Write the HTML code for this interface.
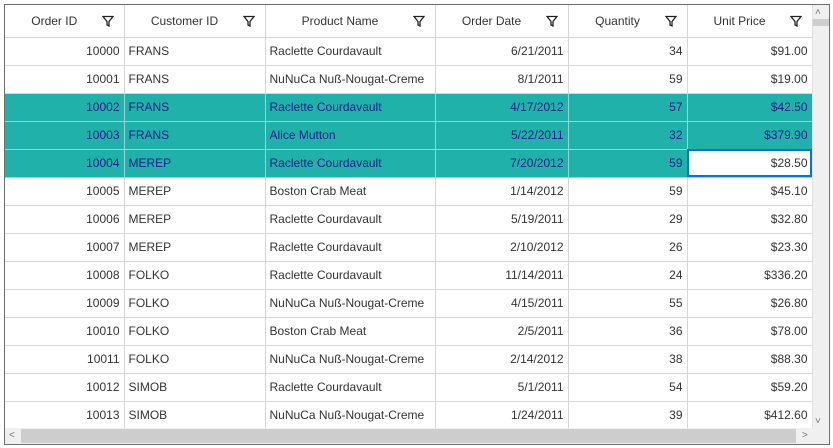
<!DOCTYPE html>
<html><head><style>
*{margin:0;padding:0;box-sizing:border-box}
body{width:833px;height:448px;background:#fff;position:relative;overflow:hidden;font-family:"Liberation Sans",sans-serif;font-size:12px;color:#333}
#frame{position:absolute;left:4px;top:4px;width:826px;height:441px;border:1px solid #6e6e6e;overflow:hidden}
table{border-collapse:collapse;table-layout:fixed;position:absolute;left:0;top:0}
td,th{height:28px;border-right:1px solid #d6d6d6;border-bottom:1px solid #d6d6d6;padding:0 4px;white-space:nowrap;overflow:hidden;font-weight:normal}
th{height:32px;text-align:center;position:relative;padding-right:24px;color:#333}
th svg{position:absolute;right:10px;top:10px}
td.r{text-align:right}
tr.sel td{background:#20b2aa;color:#1a1a8c;border-bottom-color:#8fd8d4;border-right-color:#8fd8d4}
td.cur{background:#fff!important;color:#333!important;outline:2px solid #0a74d6;outline-offset:-2px}
#vs{position:absolute;left:807px;top:0;width:17px;height:423px;background:#f0f0f0;border-left:1px solid #e2e2e2}
#vt{position:absolute;left:808px;top:14px;width:16px;height:7px;background:#cdcdcd}
#hs{position:absolute;left:0;top:423px;width:824px;height:16px;background:#f0f0f0}
#ht{position:absolute;left:16px;top:424px;width:775px;height:14px;background:#cdcdcd}
.ar{position:absolute;color:#777;font-size:10px;line-height:10px}
</style></head><body>
<div id="frame">
<table>
<colgroup><col style="width:119px"><col style="width:141px"><col style="width:170px"><col style="width:133px"><col style="width:119px"><col style="width:125px"></colgroup>
<tr>
<th>Order ID<svg width="12" height="12" viewBox="0 0 12 12"><path d="M1 1.5H11L7 6.5V11L5 10V6.5Z" fill="none" stroke="#222" stroke-width="1.3"/></svg></th>
<th>Customer ID<svg width="12" height="12" viewBox="0 0 12 12"><path d="M1 1.5H11L7 6.5V11L5 10V6.5Z" fill="none" stroke="#222" stroke-width="1.3"/></svg></th>
<th>Product Name<svg width="12" height="12" viewBox="0 0 12 12"><path d="M1 1.5H11L7 6.5V11L5 10V6.5Z" fill="none" stroke="#222" stroke-width="1.3"/></svg></th>
<th>Order Date<svg width="12" height="12" viewBox="0 0 12 12"><path d="M1 1.5H11L7 6.5V11L5 10V6.5Z" fill="none" stroke="#222" stroke-width="1.3"/></svg></th>
<th>Quantity<svg width="12" height="12" viewBox="0 0 12 12"><path d="M1 1.5H11L7 6.5V11L5 10V6.5Z" fill="none" stroke="#222" stroke-width="1.3"/></svg></th>
<th>Unit Price<svg width="12" height="12" viewBox="0 0 12 12"><path d="M1 1.5H11L7 6.5V11L5 10V6.5Z" fill="none" stroke="#222" stroke-width="1.3"/></svg></th>
</tr>
<tr><td class="r">10000</td><td>FRANS</td><td>Raclette Courdavault</td><td class="r">6/21/2011</td><td class="r">34</td><td class="r">$91.00</td></tr>
<tr><td class="r">10001</td><td>FRANS</td><td>NuNuCa Nuß-Nougat-Creme</td><td class="r">8/1/2011</td><td class="r">59</td><td class="r">$19.00</td></tr>
<tr class="sel"><td class="r">10002</td><td>FRANS</td><td>Raclette Courdavault</td><td class="r">4/17/2012</td><td class="r">57</td><td class="r">$42.50</td></tr>
<tr class="sel"><td class="r">10003</td><td>FRANS</td><td>Alice Mutton</td><td class="r">5/22/2011</td><td class="r">32</td><td class="r">$379.90</td></tr>
<tr class="sel"><td class="r">10004</td><td>MEREP</td><td>Raclette Courdavault</td><td class="r">7/20/2012</td><td class="r">59</td><td class="r cur">$28.50</td></tr>
<tr><td class="r">10005</td><td>MEREP</td><td>Boston Crab Meat</td><td class="r">1/14/2012</td><td class="r">59</td><td class="r">$45.10</td></tr>
<tr><td class="r">10006</td><td>MEREP</td><td>Raclette Courdavault</td><td class="r">5/19/2011</td><td class="r">29</td><td class="r">$32.80</td></tr>
<tr><td class="r">10007</td><td>MEREP</td><td>Raclette Courdavault</td><td class="r">2/10/2012</td><td class="r">26</td><td class="r">$23.30</td></tr>
<tr><td class="r">10008</td><td>FOLKO</td><td>Raclette Courdavault</td><td class="r">11/14/2011</td><td class="r">24</td><td class="r">$336.20</td></tr>
<tr><td class="r">10009</td><td>FOLKO</td><td>NuNuCa Nuß-Nougat-Creme</td><td class="r">4/15/2011</td><td class="r">55</td><td class="r">$26.80</td></tr>
<tr><td class="r">10010</td><td>FOLKO</td><td>Boston Crab Meat</td><td class="r">2/5/2011</td><td class="r">36</td><td class="r">$78.00</td></tr>
<tr><td class="r">10011</td><td>FOLKO</td><td>NuNuCa Nuß-Nougat-Creme</td><td class="r">2/14/2012</td><td class="r">38</td><td class="r">$88.30</td></tr>
<tr><td class="r">10012</td><td>SIMOB</td><td>Raclette Courdavault</td><td class="r">5/1/2011</td><td class="r">54</td><td class="r">$59.20</td></tr>
<tr><td class="r">10013</td><td>SIMOB</td><td>NuNuCa Nuß-Nougat-Creme</td><td class="r">1/24/2011</td><td class="r">39</td><td class="r">$412.60</td></tr>
<tr><td class="r">10014</td><td>SIMOB</td><td>Raclette Courdavault</td><td class="r">1/1/2011</td><td class="r">40</td><td class="r">$10.00</td></tr>
</table>
<div id="vs"></div><div id="vt"></div>
<div id="hs"></div><div id="ht"></div>
<div class="ar" style="left:810px;top:3px">&#x02C4;</div>
<div class="ar" style="left:810px;top:412px">&#x02C5;</div>
<div class="ar" style="left:4px;top:426px">&lt;</div>
<div class="ar" style="left:797px;top:426px">&gt;</div>
</div>
</body></html>
